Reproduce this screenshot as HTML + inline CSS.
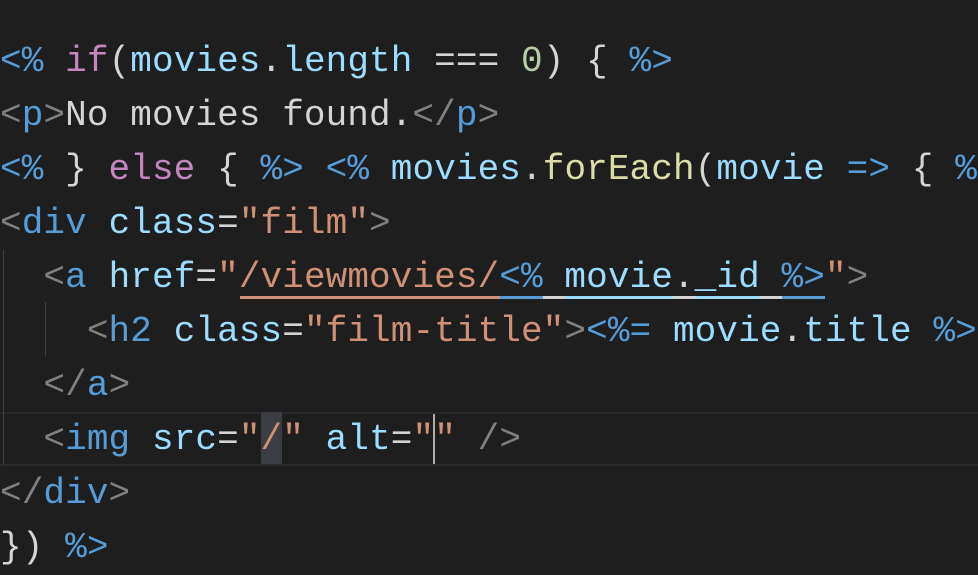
<!DOCTYPE html>
<html><head><style>
html,body{margin:0;padding:0;background:#1e1e1e;width:978px;height:534px;overflow:hidden}
.c{position:absolute;top:35px;left:0;font-family:"Liberation Mono",monospace;font-size:36px;line-height:54px;color:#d4d4d4;letter-spacing:0.1px}
.l{height:54px;position:relative;white-space:pre}
.t{color:#808080}.k{color:#569cd6}.v{color:#9cdcfe}.p{color:#c586c0}.s{color:#ce9178}.n{color:#b5cea8}.f{color:#dcdcaa}
.hl{position:absolute;left:0;top:412px;width:978px;height:54px;border-top:2px solid #282828;border-bottom:2px solid #282828;box-sizing:border-box}
.g1{position:absolute;left:3px;top:250px;width:1px;height:215px;background:#404040}
.g2{position:absolute;left:45px;top:302px;width:1px;height:54px;background:#404040}
.u{position:absolute;top:296px;height:3px}
.cur{position:absolute;left:433px;top:414px;width:2px;height:50px;background:#aeafad}
.sel{position:absolute;left:261px;top:412px;width:21px;height:52px;background:#3a3d41}
</style></head><body>
<div class="hl"></div><div class="sel"></div>
<div class="g1"></div><div class="g2"></div>
<div class="u" style="left:240px;width:260px;background:#ce9178"></div>
<div class="u" style="left:500px;width:43px;background:#569cd6"></div>
<div class="u" style="left:543px;width:22px;background:#d4d4d4"></div>
<div class="u" style="left:565px;width:108px;background:#9cdcfe"></div>
<div class="u" style="left:673px;width:22px;background:#d4d4d4"></div>
<div class="u" style="left:695px;width:65px;background:#9cdcfe"></div>
<div class="u" style="left:760px;width:22px;background:#d4d4d4"></div>
<div class="u" style="left:782px;width:43px;background:#569cd6"></div>
<div class="c"><div class="l"><span class="k">&lt;%</span> <span class="p">if</span>(<span class="v">movies</span>.<span class="v">length</span> === <span class="n">0</span>) { <span class="k">%&gt;</span></div><div class="l"><span class="t">&lt;</span><span class="k">p</span><span class="t">&gt;</span>No movies found.<span class="t">&lt;/</span><span class="k">p</span><span class="t">&gt;</span></div><div class="l"><span class="k">&lt;%</span> } <span class="p">else</span> { <span class="k">%&gt;</span> <span class="k">&lt;%</span> <span class="v">movies</span>.<span class="f">forEach</span>(<span class="v">movie</span> <span class="k">=&gt;</span> { <span class="k">%&gt;</span></div><div class="l"><span class="t">&lt;</span><span class="k">div</span> <span class="v">class</span>=<span class="s">"film"</span><span class="t">&gt;</span></div><div class="l">  <span class="t">&lt;</span><span class="k">a</span> <span class="v">href</span>=<span class="s">"/viewmovies/</span><span class="k">&lt;%</span> <span class="v">movie</span>.<span class="v">_id</span> <span class="k">%&gt;</span><span class="s">"</span><span class="t">&gt;</span></div><div class="l">    <span class="t">&lt;</span><span class="k">h2</span> <span class="v">class</span>=<span class="s">"film-title"</span><span class="t">&gt;</span><span class="k">&lt;%=</span> <span class="v">movie</span>.<span class="v">title</span> <span class="k">%&gt;</span></div><div class="l">  <span class="t">&lt;/</span><span class="k">a</span><span class="t">&gt;</span></div><div class="l">  <span class="t">&lt;</span><span class="k">img</span> <span class="v">src</span>=<span class="s">"/"</span> <span class="v">alt</span>=<span class="s">""</span> <span class="t">/&gt;</span></div><div class="l"><span class="t">&lt;/</span><span class="k">div</span><span class="t">&gt;</span></div><div class="l">}) <span class="k">%&gt;</span></div></div>
<div class="cur"></div>
</body></html>
